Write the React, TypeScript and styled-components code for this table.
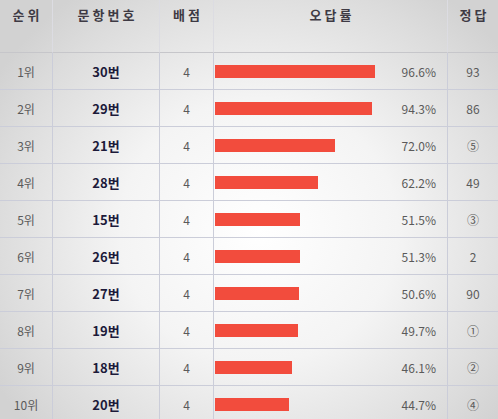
import { Fragment } from 'react';
import styled, { createGlobalStyle } from 'styled-components';

const GlobalStyle = createGlobalStyle`
  html, body {
    margin: 0;
    padding: 0;
    background: #e4e4e4;
  }
  body {
    font-family: "Noto Sans CJK KR", "Noto Sans", sans-serif;
  }
`;

const StyledBoard = styled.div`
  width: 498px;
  height: 419px;
  overflow: hidden;
  background: radial-gradient(ellipse 62% 70% at 52% 55%, #ffffff 0%, #f4f4f4 45%, #dcdcdc 85%, #d2d2d2 100%);
`;

const StyledGrid = styled.div`
  display: grid;
  grid-template-columns: 53px 107px 54px 234px 50px;
`;

const StyledHeadCell = styled.div<{ $last?: boolean }>`
  height: 53px;
  box-sizing: border-box;
  border-bottom: 1px solid #c6c6ca;
  border-right: ${(p) => (p.$last ? 'none' : '1px solid #dcdce2')};
  display: flex;
  justify-content: center;
  padding-top: 5px;
  padding-left: 3px;
  font-size: 13px;
  font-weight: 700;
  letter-spacing: 3px;
  color: #3e3a44;
`;

const StyledCell = styled.div<{ $last?: boolean }>`
  height: 37px;
  box-sizing: border-box;
  border-bottom: 1px solid #cbcdd9;
  border-right: ${(p) => (p.$last ? 'none' : '1px solid #cbcdd9')};
  display: flex;
  align-items: center;
  justify-content: center;
  font-size: 12px;
  color: #5a5a5a;
`;

const StyledQuestion = styled(StyledCell)`
  font-size: 13px;
  font-weight: 700;
  color: #1c1a3a;
`;

const StyledRateCell = styled(StyledCell)`
  justify-content: space-between;
  padding-left: 1px;
  padding-right: 11px;
`;

const StyledBar = styled.div`
  height: 13px;
  background: #f24c3d;
  margin-top: 1px;
`;

const StyledRate = styled.span`
  font-size: 12px;
  color: #5a5a5a;
`;

const rows = [
  { rank: '1위', no: '30번', point: 4, rate: 96.6, answer: '93' },
  { rank: '2위', no: '29번', point: 4, rate: 94.3, answer: '86' },
  { rank: '3위', no: '21번', point: 4, rate: 72.0, answer: '⑤' },
  { rank: '4위', no: '28번', point: 4, rate: 62.2, answer: '49' },
  { rank: '5위', no: '15번', point: 4, rate: 51.5, answer: '③' },
  { rank: '6위', no: '26번', point: 4, rate: 51.3, answer: '2' },
  { rank: '7위', no: '27번', point: 4, rate: 50.6, answer: '90' },
  { rank: '8위', no: '19번', point: 4, rate: 49.7, answer: '①' },
  { rank: '9위', no: '18번', point: 4, rate: 46.1, answer: '②' },
  { rank: '10위', no: '20번', point: 4, rate: 44.7, answer: '④' },
];

function App() {
  return (
    <>
      <GlobalStyle />
      <StyledBoard>
        <StyledGrid>
          <StyledHeadCell>순위</StyledHeadCell>
          <StyledHeadCell>문항번호</StyledHeadCell>
          <StyledHeadCell>배점</StyledHeadCell>
          <StyledHeadCell>오답률</StyledHeadCell>
          <StyledHeadCell $last>정답</StyledHeadCell>
          {rows.map((r) => (
            <Fragment key={r.rank}>
              <StyledCell>{r.rank}</StyledCell>
              <StyledQuestion>{r.no}</StyledQuestion>
              <StyledCell>{r.point}</StyledCell>
              <StyledRateCell>
                <StyledBar style={{ width: `${Math.round(r.rate * 1.66)}px` }} />
                <StyledRate>{r.rate.toFixed(1)}%</StyledRate>
              </StyledRateCell>
              <StyledCell $last>{r.answer}</StyledCell>
            </Fragment>
          ))}
        </StyledGrid>
      </StyledBoard>
    </>
  );
}

export default App;
